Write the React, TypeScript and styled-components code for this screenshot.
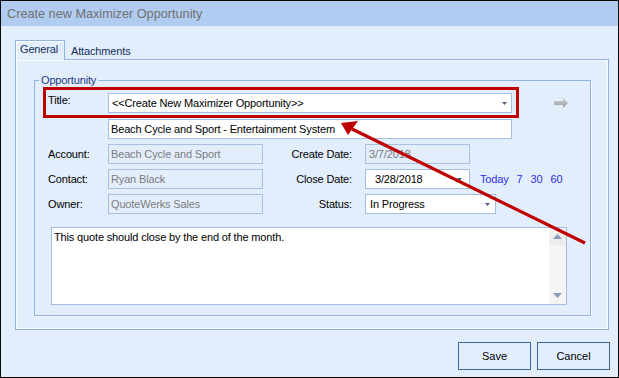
import React from "react";
import styled, { createGlobalStyle } from "styled-components";

const BODY = "#e3eefd";
const LINE = "#8db2e3";

const Global = createGlobalStyle`
  html, body { margin: 0; padding: 0; background: #fff; }
  body { font-family: "Liberation Sans", Arial, sans-serif; }
`;

const Window = styled.div`
  position: relative;
  width: 619px;
  height: 378px;
  box-sizing: border-box;
  border: 1px solid #0a0a0a;
  background: ${BODY};
  display: flex;
  flex-direction: column;
  overflow: hidden;
  font-size: 11px;
  letter-spacing: -0.15px;
  color: #000;
`;

const TitleBar = styled.div`
  height: 25px;
  flex: none;
  background: #b0ccf0;
  display: flex;
  align-items: center;
  padding-left: 6px;
  font-size: 12.7px;
  letter-spacing: 0;
  color: #707070;
`;

const Content = styled.div`
  flex: 1;
  display: flex;
  flex-direction: column;
  padding: 14px 9px 0 14px;
`;

const TabStrip = styled.div`
  height: 19px;
  display: flex;
  align-items: flex-end;
`;

const Tab = styled.div<{ $active?: boolean }>`
  box-sizing: border-box;
  position: relative;
  z-index: 1;
  color: #15305f;
  display: flex;
  align-items: center;
  ${(p) =>
    p.$active
      ? `
    width: 50px;
    height: 20px;
    margin-bottom: -1px;
    padding: 0 0 3px 4px;
    border: 1px solid ${LINE};
    border-bottom: none;
    background: ${BODY};
    box-shadow: inset 1px 1px 0 #fff;
  `
      : `
    height: 17px;
    padding: 0 0 0 6px;
  `}
`;

const Panel = styled.div`
  box-sizing: border-box;
  height: 271px;
  border: 1px solid ${LINE};
  box-shadow: inset 1px 1px 0 #f6faff, inset -1px -1px 0 #f6faff;
  padding: 20px 17px 0 18px;
`;

const GroupBox = styled.div`
  position: relative;
  box-sizing: border-box;
  height: 236px;
  border: 1px solid ${LINE};
  box-shadow: 1px 1px 0 #f6faff;
  padding: 12px 0 0 13px;
  display: flex;
  flex-direction: column;
`;

const Legend = styled.span`
  position: absolute;
  top: -7px;
  left: 4px;
  padding: 0 2px;
  background: ${BODY};
  color: #1d3c7a;
  line-height: 13px;
`;

const TitleRow = styled.div`
  position: relative;
  display: flex;
  align-items: flex-start;
  height: 20px;
`;

const Highlight = styled.div`
  position: absolute;
  left: -5px;
  top: -6px;
  width: 476px;
  height: 31px;
  box-sizing: border-box;
  border: 3px solid #c00000;
  pointer-events: none;
`;

const Label = styled.div<{ $w?: number; $right?: boolean; $top?: number }>`
  width: ${(p) => p.$w ?? 60}px;
  flex: none;
  line-height: 13px;
  padding-top: ${(p) => p.$top ?? 0}px;
  text-align: ${(p) => (p.$right ? "right" : "left")};
  box-sizing: border-box;
  padding-right: ${(p) => (p.$right ? 13 : 0)}px;
  white-space: nowrap;
`;

const Field = styled.div<{ $w: number; $disabled?: boolean; $pl?: number }>`
  box-sizing: border-box;
  width: ${(p) => p.$w}px;
  height: 20px;
  flex: none;
  border: 1px solid ${(p) => (p.$disabled ? "#a8c0e2" : "#a4bfe5")};
  background: ${(p) => (p.$disabled ? "transparent" : "#fff")};
  color: ${(p) => (p.$disabled ? "#7c7c7c" : "#000")};
  display: flex;
  align-items: center;
  padding-left: ${(p) => p.$pl ?? 2}px;
  white-space: nowrap;
`;

const DescRow = styled.div`
  margin: 6px 0 0 60px;
`;

const Grid = styled.div`
  margin-top: 5px;
  display: grid;
  grid-template-columns: 60px 155px 102px auto;
  grid-auto-rows: 20px;
  row-gap: 5px;
  align-items: center;
`;

const Cell = styled.div`
  display: flex;
  align-items: center;
`;

const Links = styled.div`
  display: flex;
  gap: 8px;
  margin-left: 10px;
  color: #2e2ee8;
`;

const Spacer = styled.div`
  flex: 1;
`;

const ArrowIcon = styled.svg`
  margin: 5px 0 0 42px;
  flex: none;
`;

const DropArrow = styled.svg<{ $mr: number }>`
  margin-left: auto;
  margin-right: ${(p) => p.$mr}px;
  flex: none;
`;

const Notes = styled.div`
  margin: 13px 0 0 3px;
  box-sizing: border-box;
  width: 516px;
  height: 78px;
  border: 1px solid #a4bfe5;
  background: #fff;
  display: flex;
`;

const NotesText = styled.div`
  flex: 1;
  padding: 3px 0 0 2px;
`;

const ScrollBar = styled.div`
  width: 17px;
  background: #f4f4f4;
  display: flex;
  flex-direction: column;
  justify-content: space-between;
`;

const ScrollButton = styled.div<{ $shade?: boolean }>`
  height: 17px;
  display: flex;
  align-items: center;
  justify-content: center;
  background: ${(p) => (p.$shade ? "linear-gradient(#f4f4f4, #ebebeb)" : "transparent")};
`;

const Footer = styled.div`
  display: flex;
  justify-content: flex-end;
  gap: 6px;
  margin: 12px -1px 0 0;
`;

const Button = styled.div`
  box-sizing: border-box;
  width: 73px;
  height: 28px;
  border: 1px solid #3d6a95;
  display: flex;
  align-items: center;
  justify-content: center;
  letter-spacing: 0;
`;

const Overlay = styled.svg`
  position: absolute;
  left: -1px;
  top: -1px;
  pointer-events: none;
`;

const Down = ({ mr }: { mr: number }) => (
  <DropArrow $mr={mr} width="5" height="3" viewBox="0 0 5 3">
    <polygon points="0,0 5,0 2.5,3" fill="#4a5f86" />
  </DropArrow>
);

const ScrollArrow = ({ up }: { up?: boolean }) => (
  <svg width="9" height="5" viewBox="0 0 9 5">
    <polygon points={up ? "0,5 9,5 4.5,0" : "0,0 9,0 4.5,5"} fill="#8a9bbb" />
  </svg>
);

export default function App() {
  return (
    <>
      <Global />
      <Window>
        <TitleBar>Create new Maximizer Opportunity</TitleBar>
        <Content>
          <TabStrip>
            <Tab $active>General</Tab>
            <Tab>Attachments</Tab>
          </TabStrip>
          <Panel>
            <GroupBox>
              <Legend>Opportunity</Legend>
              <TitleRow>
                <Label $top={1}>Title:</Label>
                <Field $w={404} $pl={3}>
                  &lt;&lt;Create New Maximizer Opportunity&gt;&gt;
                  <Down mr={4} />
                </Field>
                <ArrowIcon width="14" height="10" viewBox="0 0 14 10">
                  <defs>
                    <linearGradient id="ag" x1="0" y1="0" x2="0" y2="1">
                      <stop offset="0" stopColor="#d2d2d2" />
                      <stop offset="1" stopColor="#9a9a9a" />
                    </linearGradient>
                  </defs>
                  <polygon points="0,3 9,3 9,0 14,5 9,10 9,7 0,7" fill="url(#ag)" />
                </ArrowIcon>
                <Highlight />
              </TitleRow>
              <DescRow>
                <Field $w={404}>Beach Cycle and Sport - Entertainment System</Field>
              </DescRow>
              <Grid>
                <Label>Account:</Label>
                <Field $w={155} $disabled>Beach Cycle and Sport</Field>
                <Label $w={102} $right>Create Date:</Label>
                <Cell>
                  <Field $w={105} $disabled $pl={3}>3/7/2018</Field>
                </Cell>

                <Label>Contact:</Label>
                <Field $w={155} $disabled>Ryan Black</Field>
                <Label $w={102} $right>Close Date:</Label>
                <Cell>
                  <Field $w={105} $pl={9}>
                    3/28/2018
                    <Down mr={7} />
                  </Field>
                  <Links>
                    <span>Today</span>
                    <span>7</span>
                    <span>30</span>
                    <span>60</span>
                  </Links>
                </Cell>

                <Label>Owner:</Label>
                <Field $w={155} $disabled>QuoteWerks Sales</Field>
                <Label $w={102} $right>Status:</Label>
                <Cell>
                  <Field $w={131} $pl={4}>
                    In Progress
                    <Down mr={5} />
                  </Field>
                </Cell>
              </Grid>
              <Notes>
                <NotesText>This quote should close by the end of the month.</NotesText>
                <ScrollBar>
                  <ScrollButton $shade>
                    <ScrollArrow up />
                  </ScrollButton>
                  <ScrollButton>
                    <ScrollArrow />
                  </ScrollButton>
                </ScrollBar>
              </Notes>
              <Spacer />
            </GroupBox>
          </Panel>
          <Footer>
            <Button>Save</Button>
            <Button>Cancel</Button>
          </Footer>
        </Content>
        <Overlay width="619" height="378" viewBox="0 0 619 378">
          <line x1="585" y1="243" x2="352" y2="129" stroke="#c00000" strokeWidth="3.2" />
          <polygon points="341,123 358,121 348,135" fill="#c00000" />
        </Overlay>
      </Window>
    </>
  );
}
